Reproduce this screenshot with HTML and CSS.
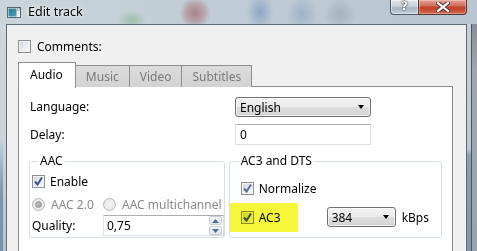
FILE: index.html
```html
<!DOCTYPE html>
<html>
<head>
<meta charset="utf-8">
<link rel="stylesheet" href="styles.css">
</head>
<body>
<div class="window">
  <div class="titlebar">
    <svg class="appicon" width="14" height="11" viewBox="0 0 14 11">
      <rect x="0.5" y="0.5" width="13" height="10" fill="#f4f6f8" stroke="#5a6470"/>
      <rect x="1.5" y="1.5" width="8" height="8" fill="url(#ig)"/>
      <rect x="10.5" y="1.5" width="2" height="2" fill="#fff" stroke="#8090a0" stroke-width="0.6"/>
      <defs>
        <linearGradient id="ig" x1="0" y1="0" x2="1" y2="1">
          <stop offset="0" stop-color="#2d7a8c"/>
          <stop offset="1" stop-color="#4aa0b8"/>
        </linearGradient>
      </defs>
    </svg>
    <span class="title">Edit track</span>
    <div class="caption-buttons">
      <div class="btn-help">?</div>
      <div class="btn-close">
        <svg width="14" height="10" viewBox="0 0 14 10">
          <path d="M2 1 L12 9 M12 1 L2 9" stroke="#4a3a3a" stroke-width="4" stroke-linecap="square"/>
          <path d="M2 1 L12 9 M12 1 L2 9" stroke="#ffffff" stroke-width="2.2" stroke-linecap="square"/>
        </svg>
      </div>
    </div>
  </div>
  <div class="frame">
    <div class="frame-left"></div>
    <div class="client">
      <div class="check-row">
        <span class="cb"></span><span class="cb-text">Comments:</span>
      </div>
      <div class="tabs">
        <div class="tab active">Audio</div>
        <div class="tab">Music</div>
        <div class="tab">Video</div>
        <div class="tab">Subtitles</div>
      </div>
      <div class="pane">
        <div class="form">
          <span class="lbl">Language:</span>
          <div class="combo combo-lang"><span>English</span><span class="arrow"></span></div>
          <span class="lbl">Delay:</span>
          <div class="textbox textbox-delay">0</div>
        </div>
        <div class="groups">
          <fieldset class="group group-aac">
            <legend>AAC</legend>
            <div class="row row-enable">
              <span class="cb checked"><svg width="11" height="11" viewBox="0 0 11 11"><path d="M2 5.5 L4.5 8.5 L9 1.5" fill="none" stroke="#3d5595" stroke-width="2"/></svg></span>
              <span class="cb-text">Enable</span>
            </div>
            <div class="row row-radio">
              <span class="radio-item col1"><span class="radio on"></span><span class="disabled">AAC 2.0</span></span>
              <span class="radio-item"><span class="radio"></span><span class="disabled">AAC multichannel</span></span>
            </div>
            <div class="row row-quality">
              <span class="col1">Quality:</span>
              <div class="spin">
                <span class="spin-val">0,75</span>
                <span class="spin-btns">
                  <span class="spin-btn"><svg width="7" height="4" viewBox="0 0 7 4"><path d="M0 4 L3.5 0 L7 4 Z" fill="#4d6a9a"/></svg></span>
                  <span class="spin-btn"><svg width="7" height="4" viewBox="0 0 7 4"><path d="M0 0 L3.5 4 L7 0 Z" fill="#4d6a9a"/></svg></span>
                </span>
              </div>
            </div>
          </fieldset>
          <fieldset class="group group-ac3">
            <legend>AC3 and DTS</legend>
            <div class="row row-normalize">
              <span class="cb checked"><svg width="11" height="11" viewBox="0 0 11 11"><path d="M2 5.5 L4.5 8.5 L9 1.5" fill="none" stroke="#5a6ea8" stroke-width="2"/></svg></span>
              <span class="cb-text">Normalize</span>
            </div>
            <div class="row row-ac3">
              <span class="highlight"></span>
              <span class="ac3-check">
                <span class="cb checked"><svg width="11" height="11" viewBox="0 0 11 11"><path d="M2 5.5 L4.5 8.5 L9 1.5" fill="none" stroke="#3d5595" stroke-width="2"/></svg></span>
                <span class="cb-text">AC3</span>
              </span>
              <div class="combo combo-rate"><span>384</span><span class="arrow"></span></div>
              <span class="unit">kBps</span>
            </div>
          </fieldset>
        </div>
      </div>
    </div>
    <div class="frame-right"></div>
  </div>
</div>
</body>
</html>
```
FILE: styles.css
```css
html, body {
  margin: 0;
  padding: 0;
}
body {
  width: 477px;
  height: 251px;
  overflow: hidden;
  font-family: "Noto Sans", "Open Sans", sans-serif;
  font-size: 12px;
  color: #000;
}
.window {
  width: 477px;
  height: 251px;
  display: flex;
  flex-direction: column;
  background:
    radial-gradient(circle at 195px 13px, rgba(150,70,70,0.55) 0, rgba(160,90,90,0.35) 9px, rgba(190,170,175,0) 16px),
    radial-gradient(ellipse 14px 10px at 132px 20px, rgba(110,175,110,0.45), rgba(110,175,110,0) 100%),
    radial-gradient(ellipse 14px 18px at 260px 12px, rgba(80,120,175,0.45), rgba(80,120,175,0) 100%),
    radial-gradient(ellipse 16px 18px at 302px 14px, rgba(100,130,175,0.35), rgba(100,130,175,0) 100%),
    radial-gradient(ellipse 16px 16px at 340px 14px, rgba(110,120,130,0.3), rgba(110,120,130,0) 100%),
    linear-gradient(to right, #c9d4db 0, #c0ccd5 50%, #b9c6d0 100%);
}
.titlebar {
  height: 24px;
  display: flex;
  align-items: flex-start;
  flex: none;
}
.appicon {
  margin: 7px 0 0 7px;
  flex: none;
}
.title {
  margin: 4px 0 0 7px;
  font-size: 12.5px;
  line-height: 16px;
  color: #000;
  text-shadow: 0 0 6px rgba(255,255,255,0.9), 0 0 3px rgba(255,255,255,0.8);
}
.caption-buttons {
  margin-left: auto;
  margin-right: 10px;
  display: flex;
  height: 15px;
}
.btn-help {
  width: 27px;
  height: 14px;
  border: 1px solid #4f5a66;
  border-top: none;
  border-right: none;
  border-radius: 0 0 0 4px;
  background: linear-gradient(to bottom, #dfe6ec 0, #c5d0d9 45%, #a9b7c3 55%, #c2ced8 100%);
  box-shadow: inset 0 0 0 1px rgba(255,255,255,0.5);
  color: #fff;
  font-family: "DejaVu Sans", sans-serif;
  font-weight: bold;
  font-size: 12px;
  line-height: 13px;
  text-align: center;
  text-shadow: 0 0 2px #333, 0 0 1px #222;
}
.btn-close {
  width: 47px;
  height: 14px;
  border: 1px solid #4f3a3a;
  border-top: none;
  border-radius: 0 0 4px 0;
  background: linear-gradient(to bottom, #e4a294 0, #d0705c 40%, #bf3d26 55%, #d46a4c 100%);
  box-shadow: inset 0 0 0 1px rgba(255,220,210,0.4);
  display: flex;
  align-items: center;
  justify-content: center;
}
.frame {
  flex: 1;
  display: flex;
  min-height: 0;
}
.frame-left {
  width: 6px;
  flex: none;
  background: linear-gradient(to bottom, #cdd7de 0, #c8d3db 55%, #b4c3cf 100%);
}
.frame-left::before {
  content: "";
  display: block;
  width: 3px;
  height: 100%;
  background: linear-gradient(to bottom, rgba(125,151,173,0) 0, rgba(125,151,173,0) 50%, #7d97ad 75%, #7791a8 100%);
}
.frame-right {
  width: 10px;
  flex: none;
  display: flex;
}
.frame-right::before {
  content: "";
  width: 4px;
  background: linear-gradient(to bottom, #c6d2da 0, #b9c8d3 55%, #86a0b5 58%, #7d97ad 100%);
}
.frame-right::after {
  content: "";
  flex: 1;
  border-left: 1px solid #4a5763;
  background: linear-gradient(to bottom, #8e8c96 0, #a2a6ac 20%, #9da3aa 100%);
}
.client {
  flex: 1;
  background: #f0f0f0;
  border: 1px solid #5e6b76;
  border-bottom: none;
  padding: 15px 13px 0 11px;
  display: flex;
  flex-direction: column;
  min-width: 0;
}
.check-row, .row {
  display: flex;
  align-items: center;
}
.check-row {
  height: 13px;
}
.cb {
  width: 11px;
  height: 11px;
  border: 1px solid #8e8f8f;
  background: linear-gradient(135deg, #cfd3d9 0, #e9ebee 50%, #fbfbfb 100%);
  box-shadow: inset 0 0 0 1px #f4f4f4;
  flex: none;
  display: flex;
  align-items: center;
  justify-content: center;
}
.cb svg {
  display: block;
}
.cb-text {
  margin-left: 6px;
  line-height: 13px;
}
.tabs {
  margin-top: 9px;
  display: flex;
  align-items: flex-end;
  height: 25px;
  position: relative;
  z-index: 1;
}
.tab {
  height: 21px;
  border: 1px solid #8c8e94;
  border-bottom: none;
  margin-left: -1px;
  background: linear-gradient(to bottom, #dcdcdc, #d2d2d2);
  color: #7b7b7b;
  line-height: 21px;
  padding: 0 10px;
}
.tab:first-child {
  margin-left: 0;
}
.tab.active {
  height: 25px;
  background: #fff;
  color: #000;
  line-height: 24px;
  padding: 0 12px 0 11px;
  margin-bottom: -1px;
  z-index: 2;
}
.pane {
  flex: 1;
  background: #fff;
  border: 1px solid #898c95;
  border-bottom: none;
  margin-top: -1px;
  padding: 10px 10px 0 10px;
}
.form {
  display: grid;
  grid-template-columns: 205px 136px;
  row-gap: 7px;
  margin-left: 1px;
  align-items: center;
}
.lbl {
  line-height: 16px;
}
.combo {
  height: 18px;
  border: 1px solid #707070;
  border-radius: 3px;
  background: linear-gradient(to bottom, #f3f3f3 0, #ebebeb 48%, #dddddd 52%, #d3d3d3 100%);
  box-shadow: inset 0 0 0 1px rgba(255,255,255,0.7);
  display: flex;
  align-items: center;
  padding: 0 6px 0 4px;
}
.combo .arrow {
  margin-left: auto;
  width: 0;
  height: 0;
  border-left: 3.5px solid transparent;
  border-right: 3.5px solid transparent;
  border-top: 4px solid #000;
}
.textbox-delay {
  height: 19px;
  border: 1px solid #dbdfe6;
  border-top-color: #abadb3;
  border-left-color: #e2e3ea;
  background: #fff;
  line-height: 19px;
  padding-left: 4px;
}
.groups {
  display: flex;
  margin-top: 8px;
  gap: 4px;
}
.group {
  margin: 0;
  padding: 0;
  min-width: 0;
  border: 1px solid #d5dfe5;
  border-radius: 3px;
  display: flex;
  flex-direction: column;
}
.group legend {
  padding: 0 2px;
  line-height: 16px;
}
.group-aac {
  width: 198px;
  padding: 0 0 1px 2px;
}
.group-aac legend {
  margin-left: 6px;
}
.group-ac3 {
  width: 207px;
  padding: 0 0 10px 11px;
}
.group-ac3 legend {
  margin-left: -2px;
}
.row-enable {
  margin-top: 6px;
  height: 13px;
}
.row-enable .cb-text {
  margin-left: 5px;
}
.row-radio {
  margin-top: 10px;
  height: 13px;
}
.col1 {
  width: 71px;
  flex: none;
}
.radio-item {
  display: flex;
  align-items: center;
}
.radio {
  width: 11px;
  height: 11px;
  border: 1px solid #b7b7b7;
  border-radius: 50%;
  background: radial-gradient(circle at 50% 50%, #f4f4f4 0, #e6e6e6 100%);
  margin-right: 6px;
  flex: none;
  display: flex;
  align-items: center;
  justify-content: center;
}
.radio.on::after {
  content: "";
  width: 5px;
  height: 5px;
  border-radius: 50%;
  background: radial-gradient(circle at 40% 40%, #c8c8c8, #8e8e8e);
  border: 0.5px solid #9a9a9a;
}
.disabled {
  color: #8a8a8a;
}
.row-quality {
  margin-top: 4px;
  height: 21px;
}
.spin {
  width: 120px;
  height: 19px;
  border: 1px solid #dbdfe6;
  border-top-color: #abadb3;
  border-left-color: #e2e3ea;
  background: #fff;
  display: flex;
  align-items: center;
  padding-left: 3px;
}
.spin-val {
  flex: 1;
}
.spin-btns {
  display: flex;
  flex-direction: column;
  margin-right: 1px;
  gap: 1px;
}
.spin-btn {
  width: 11px;
  height: 7px;
  border: 1px solid #c8ccd3;
  border-radius: 2px;
  background: linear-gradient(to bottom, #f6f7f9, #e3e6ea);
  display: flex;
  align-items: center;
  justify-content: center;
}
.spin-btn svg {
  display: block;
}
.row-normalize {
  margin-top: 13px;
  height: 13px;
}
.row-normalize .cb-text, .ac3-check .cb-text {
  margin-left: 5px;
}
.row-ac3 {
  margin-top: 12px;
  height: 20px;
  position: relative;
}
.highlight {
  position: absolute;
  left: -11px;
  top: -4px;
  width: 68px;
  height: 29px;
  background: #f6f63a;
  mix-blend-mode: multiply;
  z-index: 3;
}
.ac3-check {
  width: 86px;
  display: flex;
  align-items: center;
  flex: none;
}
.combo-rate {
  width: 57px;
  padding-right: 6px;
}
.unit {
  margin-left: 6px;
}
```
